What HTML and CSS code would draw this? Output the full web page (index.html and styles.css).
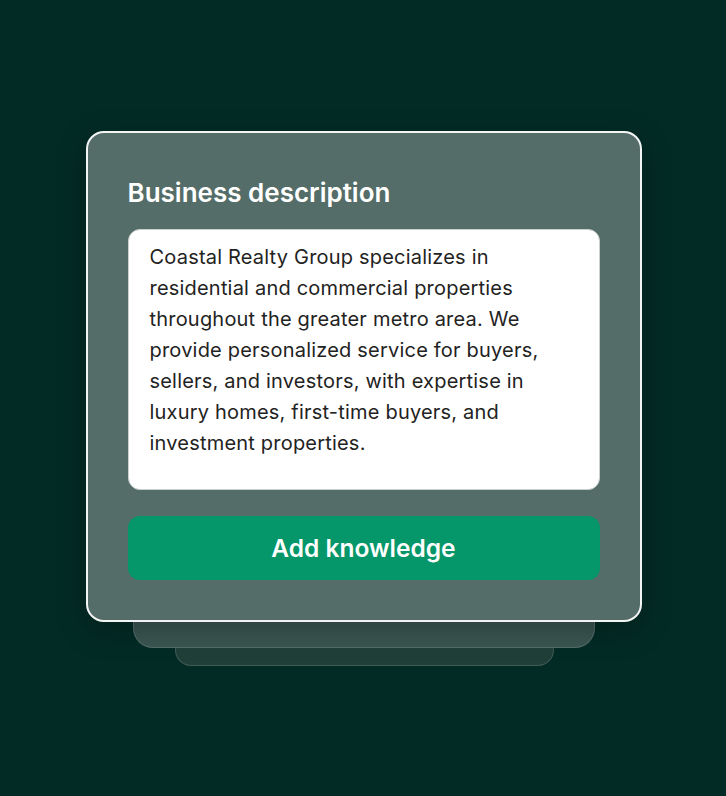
FILE: index.html
```html
<!DOCTYPE html>
<html lang="en">
<head>
    <meta charset="UTF-8">
    <meta name="viewport" content="width=device-width, initial-scale=1.0">
    <title>Business description</title>
    <link rel="stylesheet" href="styles.css">
</head>
<body>
<div class="chong">
    <div class="lop lop-2"></div>
    <div class="lop lop-1"></div>
    <div class="the">
        <h1 class="tieu-de">Business description</h1>
        <div class="o-nhap">Coastal Realty Group specializes in residential and commercial properties throughout the greater metro area. We provide personalized service for buyers, sellers, and investors, with expertise in luxury homes, first-time buyers, and investment properties.</div>
        <button class="nut-bam">Add knowledge</button>
    </div>
</div>
</body>
</html>
```

FILE: styles.css
```css
body {
    font-family: Inter, "Noto Sans", sans-serif;
    background-color: #032b25;
    display: flex;
    justify-content: center;
    align-items: center;
    height: 100vh;
    margin: 0;
}

.chong {
    position: relative;
    padding-bottom: 44px;
    margin-left: 1px;
}

.the {
    position: relative;
    width: 472px;
    padding: 45px 40px 40px;
    background-color: #546d68;
    border: 2px solid #f2f5f4;
    border-radius: 18px;
    box-shadow: 0 8px 30px rgba(0, 0, 0, 0.25);
}

.lop {
    position: absolute;
    border: 1.5px solid rgba(255, 255, 255, 0.14);
}

.lop-1 {
    left: 47px;
    right: 47px;
    bottom: 18px;
    height: 60px;
    background-color: #3a5651;
    border-radius: 0 0 20px 20px;
}

.lop-2 {
    left: 89px;
    right: 88px;
    bottom: 0;
    height: 60px;
    background-color: #213f39;
    border-radius: 0 0 16px 16px;
}

.tieu-de {
    margin: 0 0 21px;
    color: #ffffff;
    font-size: 26px;
    font-weight: 600;
    line-height: 30px;
}

.o-nhap {
    box-sizing: border-box;
    height: 261px;
    padding: 12px 20px 0 21px;
    background-color: #ffffff;
    border: 1px solid #c9cfcd;
    border-radius: 12px;
    color: #1f2322;
    font-size: 20px;
    line-height: 31px;
    letter-spacing: 0.2px;
}

.nut-bam {
    display: block;
    width: 100%;
    height: 64px;
    margin-top: 26px;
    background-color: #059669;
    color: #ffffff;
    border: none;
    border-radius: 12px;
    font-family: inherit;
    font-size: 24.5px;
    font-weight: 600;
    cursor: pointer;
}
```
